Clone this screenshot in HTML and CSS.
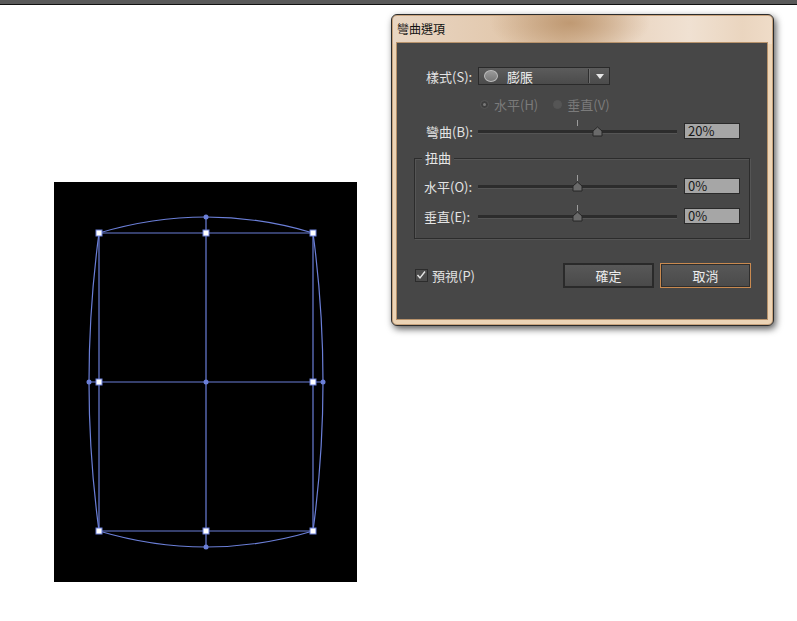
FILE: index.html
```html
<!DOCTYPE html>
<html lang="zh-Hant">
<head>
<meta charset="utf-8">
<title>彎曲選項</title>
<link rel="stylesheet" href="styles.css">
</head>
<body>
<div class="topbar"></div>
<div class="stage">
  <div class="artboard">
    <svg width="303" height="400" viewBox="0 0 303 400">
      <g fill="none" stroke="#6b7fd8" stroke-width="1.2">
        <path d="M45,51 Q152,19 259,51"/>
        <path d="M45,349 Q152,381 259,349"/>
        <path d="M45,51 Q25,200 45,349"/>
        <path d="M259,51 Q279,200 259,349"/>
        <line x1="45" y1="51" x2="259" y2="51"/>
        <line x1="45" y1="349" x2="259" y2="349"/>
        <line x1="35" y1="200" x2="269" y2="200"/>
        <line x1="45" y1="51" x2="45" y2="349"/>
        <line x1="259" y1="51" x2="259" y2="349"/>
        <line x1="152" y1="35" x2="152" y2="365"/>
      </g>
      <g fill="#6b7fd8">
        <circle cx="152" cy="35" r="2.5"/>
        <circle cx="152" cy="365" r="2.5"/>
        <circle cx="35" cy="200" r="2.5"/>
        <circle cx="269" cy="200" r="2.5"/>
        <circle cx="152" cy="200" r="2.5"/>
      </g>
      <g fill="#ffffff" stroke="#6b7fd8" stroke-width="1">
        <rect x="42" y="48" width="6" height="6"/>
        <rect x="149" y="48" width="6" height="6"/>
        <rect x="256" y="48" width="6" height="6"/>
        <rect x="42" y="346" width="6" height="6"/>
        <rect x="149" y="346" width="6" height="6"/>
        <rect x="256" y="346" width="6" height="6"/>
        <rect x="42" y="197" width="6" height="6"/>
        <rect x="256" y="197" width="6" height="6"/>
      </g>
    </svg>
  </div>

  <div class="dialog">
    <div class="titlebar">彎曲選項</div>
    <div class="panel">
      <div class="row row-style">
        <span class="label">樣式(S):</span>
        <div class="dropdown">
          <span class="shape-icon"></span>
          <span class="dd-text">膨脹</span>
          <span class="dd-sep"></span>
          <span class="dd-arrow"></span>
        </div>
      </div>

      <div class="row row-radio">
        <span class="radio checked"></span><span class="radio-text">水平(H)</span>
        <span class="radio second"></span><span class="radio-text">垂直(V)</span>
      </div>

      <div class="row row-slider">
        <span class="label">彎曲(B):</span>
        <div class="slider">
          <span class="tick"></span>
          <svg class="thumb" style="left:114px" width="11" height="11" viewBox="0 0 11 11"><polygon points="1,10 1,5 5.5,1 10,5 10,10" fill="#6a6a6a" stroke="#262626" stroke-width="1"/></svg>
        </div>
        <div class="input">20%</div>
      </div>

      <div class="group">
        <span class="legend">扭曲</span>
        <div class="row row-slider in-group">
          <span class="label">水平(O):</span>
          <div class="slider">
            <span class="tick"></span>
            <svg class="thumb" style="left:94px" width="11" height="11" viewBox="0 0 11 11"><polygon points="1,10 1,5 5.5,1 10,5 10,10" fill="#6a6a6a" stroke="#262626" stroke-width="1"/></svg>
          </div>
          <div class="input">0%</div>
        </div>
        <div class="row row-slider in-group second-row">
          <span class="label">垂直(E):</span>
          <div class="slider">
            <span class="tick"></span>
            <svg class="thumb" style="left:94px" width="11" height="11" viewBox="0 0 11 11"><polygon points="1,10 1,5 5.5,1 10,5 10,10" fill="#6a6a6a" stroke="#262626" stroke-width="1"/></svg>
          </div>
          <div class="input">0%</div>
        </div>
      </div>

      <div class="row row-bottom">
        <label class="check">
          <span class="checkbox">
            <svg width="12" height="12" viewBox="0 0 12 12"><path d="M2.5,6 L5,9 L10,2.5" fill="none" stroke="#e6e6e6" stroke-width="1.4"/></svg>
          </span>
          <span class="check-text">預視(P)</span>
        </label>
        <div class="buttons">
          <div class="btn">確定</div>
          <div class="btn btn-cancel">取消</div>
        </div>
      </div>
    </div>
  </div>
</div>
</body>
</html>
```

FILE: styles.css
```css
html, body {
  margin: 0;
  padding: 0;
  background: #ffffff;
}
body {
  font-family: "Noto Sans CJK TC", "Noto Sans", "Liberation Sans", sans-serif;
  font-size: 13px;
  width: 797px;
  height: 621px;
  overflow: hidden;
}
.topbar {
  height: 4px;
  background: #5a5a5a;
  border-bottom: 1px solid #111111;
}
.stage {
  position: relative;
  padding: 177px 0 0 54px;
}
.artboard {
  width: 303px;
  height: 400px;
  background: #000000;
}
.artboard svg {
  display: block;
}

/* dialog window */
.dialog {
  position: absolute;
  left: 391px;
  top: 9px;
  width: 370px;
  padding: 0 6px 6px 5px;
  border: 1px solid #2b2b2b;
  border-radius: 6px;
  background-color: #ecd4b6;
  background-image:
    radial-gradient(ellipse 80px 34px at 178px 8px, rgba(186,146,106,0.85), rgba(186,146,106,0) 100%),
    linear-gradient(90deg, #e9d6c3 0%, #e2c8ad 30%, #dcc0a2 45%, #ead6c2 62%, #f0e1d2 78%, #ead5bf 92%, #efdcc8 100%);
  background-repeat: no-repeat;
  background-size: 100% 100%, 100% 29px;
  box-shadow: inset 0 0 0 1px #c9a47e, 2px 3px 7px rgba(0,0,0,0.65);
}
.titlebar {
  height: 28px;
  line-height: 28px;
  color: #101010;
  font-size: 12px;
}
.panel {
  height: 252px;
  padding-top: 24px;
  background: #474747;
  color: #e4e4e4;
  box-shadow: 0 0 0 1px #b8936c;
}

.row {
  display: flex;
  align-items: center;
}
.label {
  width: 52px;
  color: #e4e4e4;
  white-space: nowrap;
}

.row-style {
  height: 18px;
  padding-left: 29px;
}
.dropdown {
  width: 130px;
  height: 16px;
  border: 1px solid #2a2a2a;
  background: linear-gradient(#5c5c5c, #4b4b4b);
  display: flex;
  align-items: center;
}
.shape-icon {
  width: 12px;
  height: 10px;
  margin-left: 5px;
  border-radius: 50%;
  border: 1px solid #bdbdbd;
  background: linear-gradient(#9a9a9a, #777777);
}
.dd-text {
  margin-left: 9px;
  color: #f0f0f0;
}
.dd-sep {
  margin-left: auto;
  width: 1px;
  height: 14px;
  background: #2e2e2e;
  box-shadow: 1px 0 0 #707070;
}
.dd-arrow {
  margin: 0 5px 0 7px;
  width: 0;
  height: 0;
  border-left: 4px solid transparent;
  border-right: 4px solid transparent;
  border-top: 5px solid #e8e8e8;
}

.row-radio {
  height: 18px;
  margin-top: 10px;
  padding-left: 83px;
}
.radio {
  width: 7px;
  height: 7px;
  border-radius: 50%;
  border: 1px solid #555555;
  background: #3e3e3e;
  position: relative;
}
.radio.checked::after {
  content: "";
  position: absolute;
  left: 2px;
  top: 2px;
  width: 3px;
  height: 3px;
  border-radius: 50%;
  background: #7a7a7a;
}
.radio.second {
  margin-left: 15px;
  background: #555555;
}
.radio-text {
  margin-left: 5px;
  color: #7b7b7b;
}

.row-slider {
  height: 16px;
  margin-top: 10px;
  padding-left: 29px;
}
.slider {
  position: relative;
  width: 199px;
  height: 16px;
}
.slider::before {
  content: "";
  position: absolute;
  left: 0;
  right: 0;
  top: 7px;
  height: 3px;
  background: #2c2c2c;
  border-bottom: 1px solid #555555;
}
.tick {
  position: absolute;
  left: 99px;
  top: -3px;
  width: 1px;
  height: 6px;
  background: #9c9c9c;
}
.thumb {
  position: absolute;
  top: 3px;
  display: block;
}
.input {
  width: 51px;
  height: 14px;
  margin-left: 7px;
  padding-left: 3px;
  border: 1px solid #2a2a2a;
  background: #a6a6a6;
  color: #161616;
  line-height: 14px;
  font-size: 13px;
}

.group {
  position: relative;
  margin: 19px 0 0 17px;
  width: 334px;
  padding: 19px 0 14px 0;
  border: 1px solid #2c2c2c;
  box-shadow: 1px 1px 0 #555555, inset 1px 1px 0 #555555;
}
.legend {
  position: absolute;
  left: 7px;
  top: -10px;
  padding: 0 3px;
  line-height: 18px;
  background: #474747;
  color: #e6e6e6;
}
.row-slider.in-group {
  margin-top: 0;
  padding-left: 9px;
}
.row-slider.in-group .label {
  width: 54px;
}
.row-slider.in-group.second-row {
  margin-top: 14px;
}

.row-bottom {
  height: 25px;
  margin-top: 24px;
  padding: 0 16px 0 18px;
}
.check {
  display: flex;
  align-items: center;
}
.checkbox {
  width: 11px;
  height: 11px;
  border: 1px solid #2c2c2c;
  background: #4c4c4c;
  display: flex;
}
.checkbox svg {
  margin: -1px 0 0 -1px;
}
.check-text {
  margin-left: 4px;
  color: #e2e2e2;
}
.buttons {
  margin-left: auto;
  display: flex;
  gap: 6px;
}
.btn {
  width: 87px;
  height: 21px;
  line-height: 21px;
  text-align: center;
  border: 2px solid #2a2a2a;
  background: linear-gradient(#585858, #4a4a4a);
  color: #ececec;
  font-size: 13px;
}
.btn-cancel {
  border: 1px solid #c98a50;
  box-shadow: inset 0 0 0 1px #2e2e2e;
  width: 89px;
  height: 23px;
  line-height: 23px;
}
```
